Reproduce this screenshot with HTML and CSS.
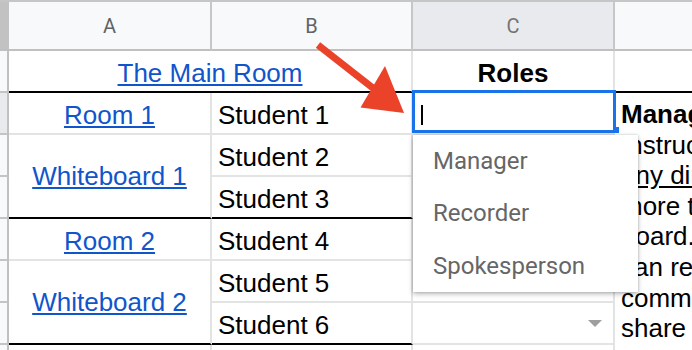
FILE: index.html
```html
<!DOCTYPE html>
<html>
<head>
<meta charset="utf-8">
<link rel="stylesheet" href="styles.css">
</head>
<body>
<div class="sheet">
  <div class="corner"></div>
  <div class="colhdr">A</div>
  <div class="colhdr">B</div>
  <div class="colhdr sel">C</div>
  <div class="colhdr"></div>

  <div class="rowhdr"></div>
  <div class="cell center thick span2c"><a class="link">The Main Room</a></div>
  <div class="cell center thick bold">Roles</div>
  <div class="cell thick"></div>

  <div class="rowhdr sel"></div>
  <div class="cell center"><a class="link">Room 1</a></div>
  <div class="cell">Student 1</div>
  <div class="cell active">
    <div class="selbox"></div>
    <div class="caret"></div>
    <div class="handle"></div>
    <div class="menu">
      <div class="item">Manager</div>
      <div class="item">Recorder</div>
      <div class="item">Spokesperson</div>
    </div>
  </div>
  <div class="notes">
    <div class="bold">Manager: Keeps</div>
    <div>Instructs the group</div>
    <div><span class="uline">any directions</span></div>
    <div>more than</div>
    <div>board.</div>
    <div>can record</div>
    <div>communicate</div>
    <div>share ideas</div>
  </div>

  <div class="rowhdr"></div>
  <div class="cell center middle thick span2r"><a class="link">Whiteboard 1</a></div>
  <div class="cell">Student 2</div>
  <div class="cell"></div>

  <div class="rowhdr"></div>
  <div class="cell thick">Student 3</div>
  <div class="cell"></div>

  <div class="rowhdr"></div>
  <div class="cell center"><a class="link">Room 2</a></div>
  <div class="cell">Student 4</div>
  <div class="cell"></div>

  <div class="rowhdr"></div>
  <div class="cell center middle thick span2r"><a class="link">Whiteboard 2</a></div>
  <div class="cell">Student 5</div>
  <div class="cell"></div>

  <div class="rowhdr"></div>
  <div class="cell thick">Student 6</div>
  <div class="cell dropcell"><span class="tri"></span></div>

  <div class="rowhdr"></div>
  <div class="cell"></div>
  <div class="cell"></div>
  <div class="cell"></div>
</div>

<svg class="arrow" width="692" height="350" viewBox="0 0 692 350">
  <line x1="318" y1="45" x2="378" y2="92" stroke="#ea4329" stroke-width="7"/>
  <polygon points="360.5,107.5 385,66 404,113" fill="#ea4329"/>
</svg>
</body>
</html>
```

FILE: styles.css
```css
html, body {
  margin: 0;
  padding: 0;
}
body {
  width: 692px;
  height: 350px;
  overflow: hidden;
  position: relative;
  background: #fff;
}
.sheet {
  display: grid;
  grid-template-columns: 9px 203px 201px 202px 200px;
  grid-template-rows: 49px repeat(8, 42px);
  border-top: 2px solid #c6c6c6;
  font-family: "Liberation Sans", Arial, sans-serif;
  font-size: 26px;
  line-height: 30px;
  color: #000;
}
.corner {
  background: #c2c2c2;
  border-bottom: 2px solid #c0c0c0;
}
.colhdr {
  background: #f8f9fa;
  border-right: 2px solid #c7c7c7;
  border-bottom: 2px solid #c0c0c0;
  display: flex;
  align-items: center;
  justify-content: center;
  font-family: Roboto, "Liberation Sans", sans-serif;
  font-size: 20px;
  color: #5f6368;
}
.colhdr.sel {
  background: #e8eaed;
  color: #737373;
}
.rowhdr {
  background: #f8f9fa;
  border-right: 2px solid #c0c0c0;
  border-bottom: 2px solid #c4c4c4;
}
.rowhdr.sel {
  background: #e8eaed;
}
.cell {
  box-sizing: border-box;
  border-right: 2px solid #e2e3e3;
  border-bottom: 2px solid #e2e3e3;
  display: flex;
  align-items: flex-end;
  padding: 0 6px 3px;
  min-width: 0;
  white-space: nowrap;
}
.center {
  justify-content: center;
}
.middle {
  align-items: center;
  padding-bottom: 0;
}
.thick {
  border-bottom-color: #000;
}
.span2c {
  grid-column: span 2;
}
.span2r {
  grid-row: span 2;
}
.bold {
  font-weight: bold;
}
.link {
  color: #1155cc;
  text-decoration: underline;
}
.uline {
  text-decoration: underline;
}
.notes {
  grid-row: span 7;
  padding: 6px 0 0 6px;
  line-height: 30.6px;
  white-space: nowrap;
  overflow: hidden;
}
.active {
  position: relative;
}
.selbox {
  position: absolute;
  left: -1px;
  top: -3px;
  right: -3px;
  bottom: 0;
  border: 3px solid #1a73e8;
  z-index: 2;
}
.caret {
  position: absolute;
  left: 8px;
  top: 12px;
  width: 2px;
  height: 20px;
  background: #000;
  z-index: 2;
}
.handle {
  position: absolute;
  right: -6px;
  bottom: 0;
  width: 6px;
  height: 6px;
  background: #1a73e8;
  z-index: 2;
}
.menu {
  position: absolute;
  left: 0;
  top: calc(100% + 2px);
  width: 225px;
  height: 157px;
  background: #fff;
  box-shadow: 0 2px 5px rgba(0, 0, 0, 0.28), 0 0 2px rgba(0, 0, 0, 0.18);
  z-index: 3;
  display: flex;
  flex-direction: column;
  font-family: Roboto, "Liberation Sans", sans-serif;
  font-size: 24px;
  color: #666;
}
.item {
  flex: 1;
  display: flex;
  align-items: center;
  padding-left: 20px;
}
.dropcell {
  justify-content: flex-end;
  align-items: center;
  padding: 0 11px 0 0;
}
.tri {
  width: 0;
  height: 0;
  border-left: 7.5px solid transparent;
  border-right: 7.5px solid transparent;
  border-top: 7px solid #9e9e9e;
}
.arrow {
  position: absolute;
  left: 0;
  top: 0;
  z-index: 4;
  pointer-events: none;
}
```
